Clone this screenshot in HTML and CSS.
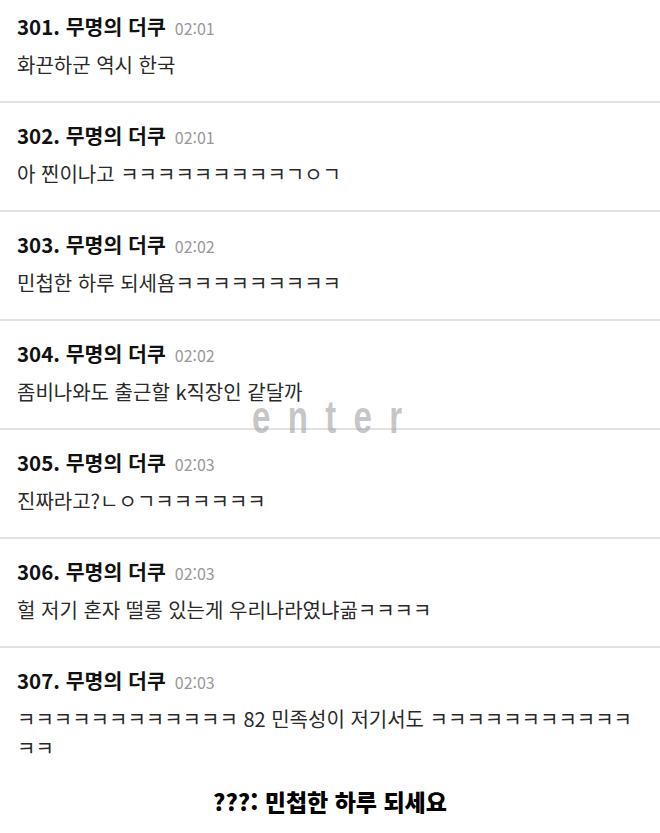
FILE: index.html
```html
<!DOCTYPE html>
<html lang="ko">
<head>
  <meta charset="UTF-8">
  <meta name="viewport" content="width=device-width, initial-scale=1.0">
  <title>무명의 더쿠 댓글</title>
  <link rel="stylesheet" href="styles.css">
</head>
<body>
  <div class="thread">
    <div class="comment">
      <div class="head"><span class="author">301. 무명의 더쿠</span><span class="time">02:01</span></div>
      <p class="text">화끈하군 역시 한국</p>
    </div>
    <div class="comment">
      <div class="head"><span class="author">302. 무명의 더쿠</span><span class="time">02:01</span></div>
      <p class="text">아 찐이나고 ㅋㅋㅋㅋㅋㅋㅋㅋㅋㄱㅇㄱ</p>
    </div>
    <div class="comment">
      <div class="head"><span class="author">303. 무명의 더쿠</span><span class="time">02:02</span></div>
      <p class="text">민첩한 하루 되세욤ㅋㅋㅋㅋㅋㅋㅋㅋㅋ</p>
    </div>
    <div class="comment">
      <div class="head"><span class="author">304. 무명의 더쿠</span><span class="time">02:02</span></div>
      <p class="text">좀비나와도 출근할 k직장인 같달까</p>
    </div>
    <div class="comment">
      <div class="head"><span class="author">305. 무명의 더쿠</span><span class="time">02:03</span></div>
      <p class="text">진짜라고?ㄴㅇㄱㅋㅋㅋㅋㅋㅋ</p>
    </div>
    <div class="comment">
      <div class="head"><span class="author">306. 무명의 더쿠</span><span class="time">02:03</span></div>
      <p class="text">헐 저기 혼자 떨롱 있는게 우리나라였냐곪ㅋㅋㅋㅋ</p>
    </div>
    <div class="comment last">
      <div class="head"><span class="author">307. 무명의 더쿠</span><span class="time">02:03</span></div>
      <p class="text">ㅋㅋㅋㅋㅋㅋㅋㅋㅋㅋㅋㅋ 82 민족성이 저기서도 ㅋㅋㅋㅋㅋㅋㅋㅋㅋㅋㅋㅋㅋ</p>
    </div>

    <span class="watermark">enter</span>
  </div>

  <p class="caption">???: 민첩한 하루 되세요</p>
</body>
</html>
```

FILE: styles.css
```css
body {
  margin: 0;
  background: #fff;
  font-family: "Noto Sans CJK KR", "Noto Sans", sans-serif;
  color: #222;
}
.thread {
  position: relative;
}
.comment {
  padding: 17px 17px 22px;
  border-bottom: 2px solid #e2e2e2;
}
.comment:first-child {
  padding-top: 11px;
}
.comment.last {
  border-bottom: none;
}
.head {
  display: flex;
  align-items: baseline;
  gap: 9px;
  height: 30px;
  line-height: 30px;
}
.author {
  font-size: 20.5px;
  font-weight: 700;
  color: #111;
}
.time {
  font-size: 16px;
  color: #999;
}
.text {
  margin: 9px 0 0;
  font-size: 20px;
  line-height: 29px;
  color: #2a2a2a;
}
.watermark {
  position: absolute;
  left: 252px;
  top: 394px;
  font-family: "Liberation Sans", sans-serif;
  font-size: 46px;
  font-weight: 700;
  line-height: 1;
  letter-spacing: 24px;
  color: rgba(160, 160, 160, 0.6);
  transform: scaleX(0.72);
  transform-origin: left top;
}
.caption {
  margin: 0;
  text-align: center;
  font-size: 23px;
  font-weight: 900;
  line-height: 34px;
  color: #000;
}
```
